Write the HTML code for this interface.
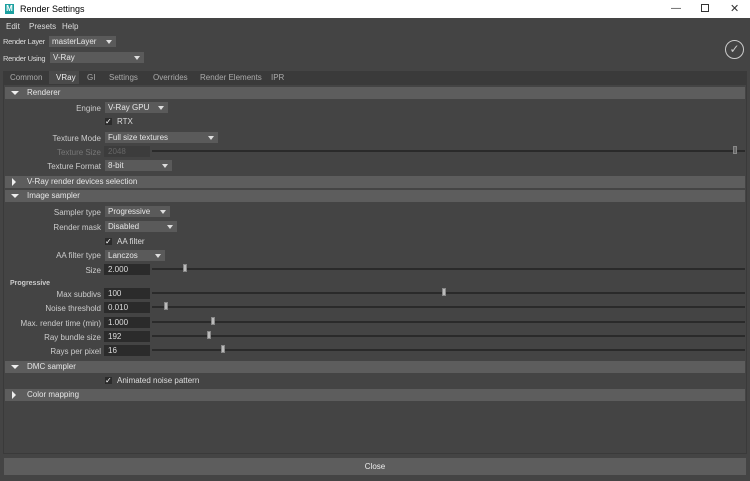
<!DOCTYPE html><html><head><style>
*{margin:0;padding:0;box-sizing:border-box}
body{width:750px;height:481px;background:#444;font-family:"Liberation Sans",sans-serif;font-size:8px;color:#ddd;position:relative;overflow:hidden}
.a{position:absolute;white-space:nowrap}
.lbl{position:absolute;right:649px;text-align:right;color:#ccc}
.fld{position:absolute;left:104px;width:46px;height:11px;background:#2b2b2b;color:#ddd;padding-left:4px;line-height:11px}
.dd{position:absolute;height:11px;background:#5a5a5a;color:#e6e6e6;padding-left:3px;line-height:11px}
.dd:after{content:"";position:absolute;right:4px;top:4px;border-left:3px solid transparent;border-right:3px solid transparent;border-top:4px solid #ddd}
.sl{position:absolute;left:152px;right:5px;height:2px;background:#2a2a2a}
.h{position:absolute;width:4px;height:8px;background:#bbb;border:1px solid #888}
.sec{position:absolute;left:5px;right:5px;height:12px;background:#5d5d5d;color:#e6e6e6;line-height:12px;padding-left:22px}
.tri{position:absolute;left:6px;top:4px;border-left:4px solid transparent;border-right:4px solid transparent;border-top:4px solid #eee}
.tr{position:absolute;left:7px;top:2px;border-top:4px solid transparent;border-bottom:4px solid transparent;border-left:4px solid #eee}
.cb{position:absolute;left:105px;width:7px;height:7px;background:#2b2b2b;color:#fff;font-size:8px;line-height:7px}
</style></head><body>
<div class="a" style="left:0;top:0;width:750px;height:18px;background:#fff;color:#000;font-size:9px;line-height:18px;padding-left:20px">Render Settings</div>
<div class="a" style="left:5px;top:4px;width:9px;height:10px;background:#1ba0a0;color:#fff;font-size:8px;font-weight:bold;line-height:10px;text-align:center">M</div>
<div class="a" style="left:671px;top:0;color:#333;font-size:10px;line-height:18px">—</div>
<div class="a" style="left:701px;top:4px;width:8px;height:8px;border:1px solid #333"></div>
<div class="a" style="left:730px;top:0;color:#333;font-size:11px;line-height:18px">✕</div>
<div class="a" style="left:6px;top:22px">Edit</div><div class="a" style="left:29px;top:22px">Presets</div><div class="a" style="left:62px;top:22px">Help</div>
<div class="a" style="left:3px;top:37px;font-size:7.5px;letter-spacing:-0.3px">Render Layer</div><div class="dd" style="left:49px;top:36px;width:67px">masterLayer</div>
<div class="a" style="left:3px;top:54px;font-size:7.5px;letter-spacing:-0.3px">Render Using</div><div class="dd" style="left:50px;top:52px;width:94px">V-Ray</div>
<div class="a" style="left:725px;top:40px;width:19px;height:19px;border:1.5px solid #ccc;border-radius:50%;color:#ccc;font-size:12px;text-align:center;line-height:16px">✓</div>
<div class="a" style="left:3px;top:71px;width:744px;height:13px;background:#3a3a3a"></div>
<div class="a" style="left:49px;top:71px;width:30px;height:13px;background:#4a4a4a"></div>
<div class="a" style="left:10px;top:73px;color:#aaa">Common</div><div class="a" style="left:56px;top:73px;color:#eee">VRay</div><div class="a" style="left:87px;top:73px;color:#aaa">GI</div><div class="a" style="left:109px;top:73px;color:#aaa">Settings</div><div class="a" style="left:153px;top:73px;color:#aaa">Overrides</div><div class="a" style="left:200px;top:73px;color:#aaa">Render Elements</div><div class="a" style="left:271px;top:73px;color:#aaa">IPR</div>
<div class="a" style="left:3px;top:84px;width:744px;height:370px;background:#444;border:1px solid #3a3a3a"></div>
<div class="sec" style="top:87px"><span class="tri"></span>Renderer</div>
<div class="lbl" style="top:104px">Engine</div><div class="dd" style="left:105px;top:102px;width:63px">V-Ray GPU</div>
<div class="cb" style="top:118px">✓</div><div class="a" style="left:117px;top:117px">RTX</div>
<div class="lbl" style="top:134px">Texture Mode</div><div class="dd" style="left:105px;top:132px;width:113px">Full size textures</div>
<div class="lbl" style="top:148px;color:#777">Texture Size</div><div class="fld" style="top:146px;background:#3c3c3c;color:#666">2048</div><div class="sl" style="top:150px"></div><div class="h" style="left:733px;top:146px;background:#666"></div>
<div class="lbl" style="top:162px">Texture Format</div><div class="dd" style="left:105px;top:160px;width:67px">8-bit</div>
<div class="sec" style="top:176px"><span class="tr"></span>V-Ray render devices selection</div>
<div class="sec" style="top:190px"><span class="tri"></span>Image sampler</div>
<div class="lbl" style="top:208px">Sampler type</div><div class="dd" style="left:105px;top:206px;width:65px">Progressive</div>
<div class="lbl" style="top:223px">Render mask</div><div class="dd" style="left:105px;top:221px;width:72px">Disabled</div>
<div class="cb" style="top:238px">✓</div><div class="a" style="left:117px;top:237px">AA filter</div>
<div class="lbl" style="top:251px">AA filter type</div><div class="dd" style="left:105px;top:250px;width:60px">Lanczos</div>
<div class="lbl" style="top:266px">Size</div><div class="fld" style="top:264px">2.000</div><div class="sl" style="top:268px"></div><div class="h" style="left:183px;top:264px"></div>
<div class="a" style="left:10px;top:280px;font-size:7px;font-weight:bold;color:#ccc">Progressive</div>
<div class="lbl" style="top:290px">Max subdivs</div><div class="fld" style="top:288px">100</div><div class="sl" style="top:292px"></div><div class="h" style="left:442px;top:288px"></div>
<div class="lbl" style="top:304px">Noise threshold</div><div class="fld" style="top:302px">0.010</div><div class="sl" style="top:306px"></div><div class="h" style="left:164px;top:302px"></div>
<div class="lbl" style="top:319px">Max. render time (min)</div><div class="fld" style="top:317px">1.000</div><div class="sl" style="top:321px"></div><div class="h" style="left:211px;top:317px"></div>
<div class="lbl" style="top:333px">Ray bundle size</div><div class="fld" style="top:331px">192</div><div class="sl" style="top:335px"></div><div class="h" style="left:207px;top:331px"></div>
<div class="lbl" style="top:347px">Rays per pixel</div><div class="fld" style="top:345px">16</div><div class="sl" style="top:349px"></div><div class="h" style="left:221px;top:345px"></div>
<div class="sec" style="top:361px"><span class="tri"></span>DMC sampler</div>
<div class="cb" style="top:377px">✓</div><div class="a" style="left:117px;top:376px">Animated noise pattern</div>
<div class="sec" style="top:389px"><span class="tr"></span>Color mapping</div>
<div class="a" style="left:4px;top:458px;width:742px;height:17px;background:#5d5d5d;text-align:center;line-height:17px;color:#eee">Close</div>
</body></html>
